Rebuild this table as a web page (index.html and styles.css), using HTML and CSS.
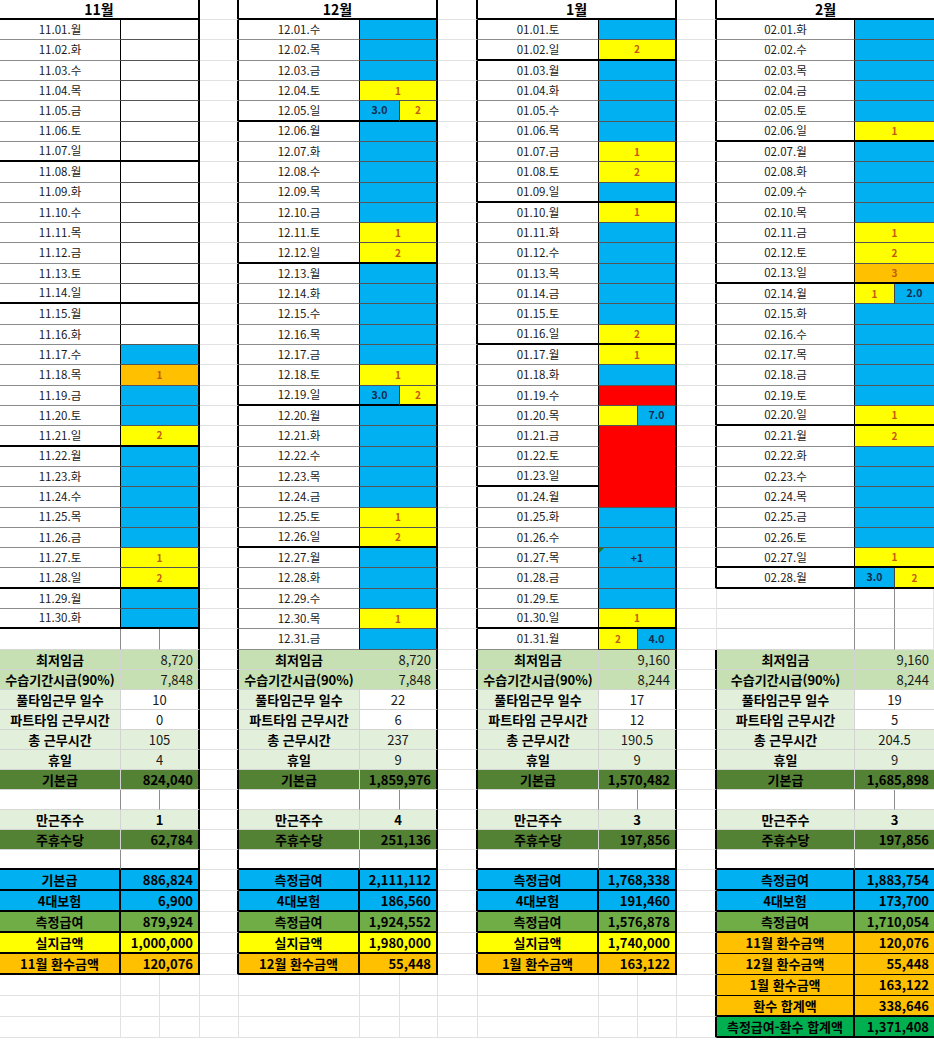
FILE: index.html
```html
<!DOCTYPE html>
<html lang="ko">
<head>
<meta charset="utf-8">
<title>급여 계산</title>
<link rel="stylesheet" href="styles.css">
</head>
<body>
<div class="sheet">
<!-- header -->
<div class="h">11월</div><div class="e"></div><div class="h">12월</div><div class="e"></div><div class="h">1월</div><div class="e"></div><div class="h x">2월</div>
<!-- 1 -->
<div class="d">11.01.월</div><div class="v"></div><div class="e"></div><div class="d">12.01.수</div><div class="v b"></div><div class="e"></div><div class="d">01.01.토</div><div class="v b"></div><div class="e"></div><div class="d">02.01.화</div><div class="v b x"></div>
<!-- 2 -->
<div class="d">11.02.화</div><div class="v"></div><div class="e"></div><div class="d">12.02.목</div><div class="v b"></div><div class="e"></div><div class="d w">01.02.일</div><div class="v y n w">2</div><div class="e"></div><div class="d">02.02.수</div><div class="v b x"></div>
<!-- 3 -->
<div class="d">11.03.수</div><div class="v"></div><div class="e"></div><div class="d">12.03.금</div><div class="v b"></div><div class="e"></div><div class="d">01.03.월</div><div class="v b"></div><div class="e"></div><div class="d">02.03.목</div><div class="v b x"></div>
<!-- 4 -->
<div class="d">11.04.목</div><div class="v"></div><div class="e"></div><div class="d">12.04.토</div><div class="v y n">1</div><div class="e"></div><div class="d">01.04.화</div><div class="v b"></div><div class="e"></div><div class="d">02.04.금</div><div class="v b x"></div>
<!-- 5 -->
<div class="d">11.05.금</div><div class="v"></div><div class="e"></div><div class="d w">12.05.일</div><div class="v1 b t w">3.0</div><div class="v2 y n w">2</div><div class="e"></div><div class="d">01.05.수</div><div class="v b"></div><div class="e"></div><div class="d">02.05.토</div><div class="v b x"></div>
<!-- 6 -->
<div class="d">11.06.토</div><div class="v"></div><div class="e"></div><div class="d">12.06.월</div><div class="v b"></div><div class="e"></div><div class="d">01.06.목</div><div class="v b"></div><div class="e"></div><div class="d w">02.06.일</div><div class="v y n w x">1</div>
<!-- 7 -->
<div class="d w">11.07.일</div><div class="v w"></div><div class="e"></div><div class="d">12.07.화</div><div class="v b"></div><div class="e"></div><div class="d">01.07.금</div><div class="v y n">1</div><div class="e"></div><div class="d">02.07.월</div><div class="v b x"></div>
<!-- 8 -->
<div class="d">11.08.월</div><div class="v"></div><div class="e"></div><div class="d">12.08.수</div><div class="v b"></div><div class="e"></div><div class="d">01.08.토</div><div class="v y n">2</div><div class="e"></div><div class="d">02.08.화</div><div class="v b x"></div>
<!-- 9 -->
<div class="d">11.09.화</div><div class="v"></div><div class="e"></div><div class="d">12.09.목</div><div class="v b"></div><div class="e"></div><div class="d w">01.09.일</div><div class="v b w"></div><div class="e"></div><div class="d">02.09.수</div><div class="v b x"></div>
<!-- 10 -->
<div class="d">11.10.수</div><div class="v"></div><div class="e"></div><div class="d">12.10.금</div><div class="v b"></div><div class="e"></div><div class="d">01.10.월</div><div class="v y n">1</div><div class="e"></div><div class="d">02.10.목</div><div class="v b x"></div>
<!-- 11 -->
<div class="d">11.11.목</div><div class="v"></div><div class="e"></div><div class="d">12.11.토</div><div class="v y n">1</div><div class="e"></div><div class="d">01.11.화</div><div class="v b"></div><div class="e"></div><div class="d">02.11.금</div><div class="v y n x">1</div>
<!-- 12 -->
<div class="d">11.12.금</div><div class="v"></div><div class="e"></div><div class="d w">12.12.일</div><div class="v y n w">2</div><div class="e"></div><div class="d">01.12.수</div><div class="v b"></div><div class="e"></div><div class="d">02.12.토</div><div class="v y n x">2</div>
<!-- 13 -->
<div class="d">11.13.토</div><div class="v"></div><div class="e"></div><div class="d">12.13.월</div><div class="v b"></div><div class="e"></div><div class="d">01.13.목</div><div class="v b"></div><div class="e"></div><div class="d w">02.13.일</div><div class="v o n w x">3</div>
<!-- 14 -->
<div class="d w">11.14.일</div><div class="v w"></div><div class="e"></div><div class="d">12.14.화</div><div class="v b"></div><div class="e"></div><div class="d">01.14.금</div><div class="v b"></div><div class="e"></div><div class="d">02.14.월</div><div class="v1 y n">1</div><div class="v2 b t x">2.0</div>
<!-- 15 -->
<div class="d">11.15.월</div><div class="v"></div><div class="e"></div><div class="d">12.15.수</div><div class="v b"></div><div class="e"></div><div class="d">01.15.토</div><div class="v b"></div><div class="e"></div><div class="d">02.15.화</div><div class="v b x"></div>
<!-- 16 -->
<div class="d">11.16.화</div><div class="v"></div><div class="e"></div><div class="d">12.16.목</div><div class="v b"></div><div class="e"></div><div class="d w">01.16.일</div><div class="v y n w">2</div><div class="e"></div><div class="d">02.16.수</div><div class="v b x"></div>
<!-- 17 -->
<div class="d">11.17.수</div><div class="v b"></div><div class="e"></div><div class="d">12.17.금</div><div class="v b"></div><div class="e"></div><div class="d">01.17.월</div><div class="v y n">1</div><div class="e"></div><div class="d">02.17.목</div><div class="v b x"></div>
<!-- 18 -->
<div class="d">11.18.목</div><div class="v o n">1</div><div class="e"></div><div class="d">12.18.토</div><div class="v y n">1</div><div class="e"></div><div class="d">01.18.화</div><div class="v b"></div><div class="e"></div><div class="d">02.18.금</div><div class="v b x"></div>
<!-- 19 -->
<div class="d">11.19.금</div><div class="v b"></div><div class="e"></div><div class="d w">12.19.일</div><div class="v1 b t w">3.0</div><div class="v2 y n w">2</div><div class="e"></div><div class="d">01.19.수</div><div class="v r"></div><div class="e"></div><div class="d">02.19.토</div><div class="v b x"></div>
<!-- 20 -->
<div class="d">11.20.토</div><div class="v b"></div><div class="e"></div><div class="d">12.20.월</div><div class="v b"></div><div class="e"></div><div class="d">01.20.목</div><div class="v1 y"></div><div class="v2 b t">7.0</div><div class="e"></div><div class="d w">02.20.일</div><div class="v y n w x">1</div>
<!-- 21 -->
<div class="d w">11.21.일</div><div class="v y n w">2</div><div class="e"></div><div class="d">12.21.화</div><div class="v b"></div><div class="e"></div><div class="d">01.21.금</div><div class="v r rn"></div><div class="e"></div><div class="d">02.21.월</div><div class="v y n x">2</div>
<!-- 22 -->
<div class="d">11.22.월</div><div class="v b"></div><div class="e"></div><div class="d">12.22.수</div><div class="v b"></div><div class="e"></div><div class="d">01.22.토</div><div class="v r rn"></div><div class="e"></div><div class="d">02.22.화</div><div class="v b x"></div>
<!-- 23 -->
<div class="d">11.23.화</div><div class="v b"></div><div class="e"></div><div class="d">12.23.목</div><div class="v b"></div><div class="e"></div><div class="d w">01.23.일</div><div class="v r rn"></div><div class="e"></div><div class="d">02.23.수</div><div class="v b x"></div>
<!-- 24 -->
<div class="d">11.24.수</div><div class="v b"></div><div class="e"></div><div class="d">12.24.금</div><div class="v b"></div><div class="e"></div><div class="d">01.24.월</div><div class="v r"></div><div class="e"></div><div class="d">02.24.목</div><div class="v b x"></div>
<!-- 25 -->
<div class="d">11.25.목</div><div class="v b"></div><div class="e"></div><div class="d">12.25.토</div><div class="v y n">1</div><div class="e"></div><div class="d">01.25.화</div><div class="v b"></div><div class="e"></div><div class="d">02.25.금</div><div class="v b x"></div>
<!-- 26 -->
<div class="d">11.26.금</div><div class="v b"></div><div class="e"></div><div class="d w">12.26.일</div><div class="v y n w">2</div><div class="e"></div><div class="d">01.26.수</div><div class="v b"></div><div class="e"></div><div class="d">02.26.토</div><div class="v b x"></div>
<!-- 27 -->
<div class="d">11.27.토</div><div class="v y n">1</div><div class="e"></div><div class="d">12.27.월</div><div class="v b"></div><div class="e"></div><div class="d">01.27.목</div><div class="v b t tri">+1</div><div class="e"></div><div class="d w">02.27.일</div><div class="v y n w x">1</div>
<!-- 28 -->
<div class="d w">11.28.일</div><div class="v y n w">2</div><div class="e"></div><div class="d">12.28.화</div><div class="v b"></div><div class="e"></div><div class="d">01.28.금</div><div class="v b"></div><div class="e"></div><div class="d w">02.28.월</div><div class="v1 b t w">3.0</div><div class="v2 y n w x">2</div>
<!-- 29 -->
<div class="d">11.29.월</div><div class="v b"></div><div class="e"></div><div class="d">12.29.수</div><div class="v b"></div><div class="e"></div><div class="d">01.29.토</div><div class="v b"></div><div></div><div class="p1"></div><div class="p1"></div><div></div>
<!-- 30 -->
<div class="d w">11.30.화</div><div class="v b w"></div><div class="e"></div><div class="d">12.30.목</div><div class="v y n">1</div><div class="e"></div><div class="d w">01.30.일</div><div class="v y n w">1</div><div></div><div class="p1"></div><div class="p1"></div><div></div>
<!-- 31 -->
<div class="p1"></div><div class="p1"></div><div class="p2"></div><div class="e"></div><div class="d">12.31.금</div><div class="v b"></div><div class="e"></div><div class="d">01.31.월</div><div class="v1 y n">2</div><div class="v2 b t">4.0</div><div></div><div class="p1"></div><div class="p1"></div><div></div>
<!-- 32 최저임금 -->
<div class="l g1">최저임금</div><div class="s g1 ra">8,720</div><div class="e"></div><div class="l g1">최저임금</div><div class="s g1 ra">8,720</div><div class="e"></div><div class="l g1">최저임금</div><div class="s g1 ra">9,160</div><div class="e"></div><div class="l g1">최저임금</div><div class="s g1 ra x">9,160</div>
<!-- 33 -->
<div class="l g1">수습기간시급(90%)</div><div class="s g1 ra">7,848</div><div class="e"></div><div class="l g1">수습기간시급(90%)</div><div class="s g1 ra">7,848</div><div class="e"></div><div class="l g1">수습기간시급(90%)</div><div class="s g1 ra">8,244</div><div class="e"></div><div class="l g1">수습기간시급(90%)</div><div class="s g1 ra x">8,244</div>
<!-- 34 -->
<div class="l g2">풀타임근무 일수</div><div class="s">10</div><div class="e"></div><div class="l g2">풀타임근무 일수</div><div class="s">22</div><div class="e"></div><div class="l g2">풀타임근무 일수</div><div class="s">17</div><div class="e"></div><div class="l g2">풀타임근무 일수</div><div class="s x">19</div>
<!-- 35 -->
<div class="l g2">파트타임 근무시간</div><div class="s">0</div><div class="e"></div><div class="l g2">파트타임 근무시간</div><div class="s">6</div><div class="e"></div><div class="l g2">파트타임 근무시간</div><div class="s">12</div><div class="e"></div><div class="l g2">파트타임 근무시간</div><div class="s x">5</div>
<!-- 36 -->
<div class="l g2">총 근무시간</div><div class="s g2">105</div><div class="e"></div><div class="l g2">총 근무시간</div><div class="s g2">237</div><div class="e"></div><div class="l g2">총 근무시간</div><div class="s g2">190.5</div><div class="e"></div><div class="l g2">총 근무시간</div><div class="s g2 x">204.5</div>
<!-- 37 -->
<div class="l g2">휴일</div><div class="s g2">4</div><div class="e"></div><div class="l g2">휴일</div><div class="s g2">9</div><div class="e"></div><div class="l g2">휴일</div><div class="s g2">9</div><div class="e"></div><div class="l g2">휴일</div><div class="s g2 x">9</div>
<!-- 38 -->
<div class="l g3">기본급</div><div class="s g3 ra bd">824,040</div><div class="e"></div><div class="l g3">기본급</div><div class="s g3 ra bd">1,859,976</div><div class="e"></div><div class="l g3">기본급</div><div class="s g3 ra bd">1,570,482</div><div class="e"></div><div class="l g3">기본급</div><div class="s g3 ra bd x">1,685,898</div>
<!-- 39 -->
<div class="p1"></div><div class="p1"></div><div class="p2"></div><div class="e"></div><div class="p1"></div><div class="p1"></div><div class="p2"></div><div class="e"></div><div class="p1"></div><div class="p1"></div><div class="p2"></div><div class="e"></div><div class="p1"></div><div class="p1"></div><div class="p2 x"></div>
<!-- 40 -->
<div class="l g2">만근주수</div><div class="s g2 bd">1</div><div class="e"></div><div class="l g2">만근주수</div><div class="s g2 bd">4</div><div class="e"></div><div class="l g2">만근주수</div><div class="s g2 bd">3</div><div class="e"></div><div class="l g2">만근주수</div><div class="s g2 bd x">3</div>
<!-- 41 -->
<div class="l g3">주휴수당</div><div class="s g3 ra bd">62,784</div><div class="e"></div><div class="l g3">주휴수당</div><div class="s g3 ra bd">251,136</div><div class="e"></div><div class="l g3">주휴수당</div><div class="s g3 ra bd">197,856</div><div class="e"></div><div class="l g3">주휴수당</div><div class="s g3 ra bd x">197,856</div>
<!-- 42 -->
<div class="p1 kt"></div><div class="s kt"></div><div class="e"></div><div class="p1 kt"></div><div class="s kt"></div><div class="e"></div><div class="p1 kt"></div><div class="s kt"></div><div class="e"></div><div class="p1 kt"></div><div class="s kt x"></div>
<!-- 43 -->
<div class="k bl">기본급</div><div class="k ks bl ra">886,824</div><div class="e"></div><div class="k bl">측정급여</div><div class="k ks bl ra">2,111,112</div><div class="e"></div><div class="k bl">측정급여</div><div class="k ks bl ra">1,768,338</div><div class="e"></div><div class="k bl">측정급여</div><div class="k ks bl ra x">1,883,754</div>
<!-- 44 -->
<div class="k bl">4대보험</div><div class="k ks bl ra">6,900</div><div class="e"></div><div class="k bl">4대보험</div><div class="k ks bl ra">186,560</div><div class="e"></div><div class="k bl">4대보험</div><div class="k ks bl ra">191,460</div><div class="e"></div><div class="k bl">4대보험</div><div class="k ks bl ra x">173,700</div>
<!-- 45 -->
<div class="k gr">측정급여</div><div class="k ks gr ra">879,924</div><div class="e"></div><div class="k gr">측정급여</div><div class="k ks gr ra">1,924,552</div><div class="e"></div><div class="k gr">측정급여</div><div class="k ks gr ra">1,576,878</div><div class="e"></div><div class="k gr">측정급여</div><div class="k ks gr ra x">1,710,054</div>
<!-- 46 -->
<div class="k ye">실지급액</div><div class="k ks ye ra">1,000,000</div><div class="e"></div><div class="k ye">실지급액</div><div class="k ks ye ra">1,980,000</div><div class="e"></div><div class="k ye">실지급액</div><div class="k ks ye ra">1,740,000</div><div class="e"></div><div class="k or k1">11월 환수금액</div><div class="k ks or ra k1 x">120,076</div>
<!-- 47 -->
<div class="k or">11월 환수금액</div><div class="k ks or ra">120,076</div><div class="e"></div><div class="k or">12월 환수금액</div><div class="k ks or ra">55,448</div><div class="e"></div><div class="k or">1월 환수금액</div><div class="k ks or ra">163,122</div><div class="e"></div><div class="k or k1">12월 환수금액</div><div class="k ks or ra k1 x">55,448</div>
<!-- 48 -->
<div></div><div></div><div></div><div></div><div></div><div></div><div></div><div></div><div></div><div></div><div></div><div class="e"></div><div class="k or k1">1월 환수금액</div><div class="k ks or ra k1 x">163,122</div>
<!-- 49 -->
<div></div><div></div><div></div><div></div><div></div><div></div><div></div><div></div><div></div><div></div><div></div><div class="e"></div><div class="k or">환수 합계액</div><div class="k ks or ra x">338,646</div>
<!-- 50 -->
<div></div><div></div><div></div><div></div><div></div><div></div><div></div><div></div><div></div><div></div><div></div><div class="e"></div><div class="k gg">측정급여-환수 합계액</div><div class="k ks gg ra x">1,371,408</div>
</div>
</body>
</html>
```

FILE: styles.css
```css
html, body {
  margin: 0;
  padding: 0;
  background: #fff;
}

body {
  font-family: "Noto Sans CJK KR", "Noto Sans", sans-serif;
  color: #000;
}

.sheet {
  display: grid;
  width: 934px;
  grid-template-columns: 121px 39px 40px 39px 121px 40px 38px 40px 121px 39px 39px 40px 138px 40px 39px;
  grid-template-rows: 20px repeat(31, 20.32px) repeat(11, 20px) repeat(8, 21px);
}

:where(.sheet > div) {
  box-sizing: border-box;
  border-right: 1px solid #e2e2e2;
  border-bottom: 1px solid #e2e2e2;
  display: flex;
  align-items: center;
  justify-content: center;
  white-space: nowrap;
  overflow: hidden;
  font-size: 11.5px;
  line-height: 1;
  min-width: 0;
  position: relative;
}

/* gap column cell to the left of a month block */
.e { border-right: 2px solid #000; }

/* month header */
.h {
  grid-column: span 3;
  font-weight: 700;
  font-size: 14px;
  border-right: 2px solid #000;
  border-bottom: 2px solid #000;
}

/* date cell */
.d {
  border-right: 1px solid #000;
  border-bottom: 1px solid #8c8c8c;
  color: #1a1a1a;
}

/* merged value cell */
.v {
  grid-column: span 2;
  border-right: 2px solid #000;
  border-bottom: 1px solid #555;
}

/* split value cells */
.v1 {
  border-right: 1px solid #444;
  border-bottom: 1px solid #555;
}
.v2 {
  border-right: 2px solid #000;
  border-bottom: 1px solid #555;
}

/* plain cells inside a block */
.p1 {
  border-right: 1px solid #8c8c8c;
  border-bottom: 1px solid #d6d6d6;
}
.p2 {
  border-right: 2px solid #000;
  border-bottom: 1px solid #d6d6d6;
}

/* week boundary */
.w { border-bottom: 2px solid #000; }

.b { background: #00b0f0; }
.y { background: #ffff00; }
.o { background: #ffc000; }
.r { background: #ff0000; }
.rn { border-bottom-color: #ff0000; }

.n {
  color: #c55a11;
  font-weight: 700;
  font-size: 10px;
}
.t {
  color: #142b4f;
  font-weight: 700;
  font-size: 10.5px;
}

.tri::before {
  content: "";
  position: absolute;
  left: 0;
  top: 0;
  border-top: 5px solid #1e7b1e;
  border-right: 5px solid transparent;
}

/* summary */
.l {
  font-weight: 700;
  font-size: 13px;
  border-right: 1px solid #d3d3d3;
  border-bottom: 1px solid #d3d3d3;
}
.s {
  grid-column: span 2;
  font-size: 13px;
  border-right: 2px solid #000;
  border-bottom: 1px solid #d3d3d3;
  color: #1a1a1a;
}
.ra {
  justify-content: flex-end;
  padding-right: 5px;
}
.bd { font-weight: 700; color: #000; }

.g1 { background: #c6e0b4; }
.g2 { background: #e2efda; }
.g3 { background: #548235; }

.kt { border-bottom: 2px solid #000; }

/* bottom pay table */
.k {
  font-weight: 700;
  font-size: 13px;
  border-right: 2px solid #000;
  border-bottom: 2px solid #000;
}
.ks { grid-column: span 2; }
.k1 { border-bottom-width: 1px; }

.bl { background: #00b0f0; }
.gr { background: #70ad47; }
.ye { background: #ffff00; }
.or { background: #ffc000; }
.gg { background: #00b050; }

/* last column has no right edge */
.x { border-right: 0; }
```
